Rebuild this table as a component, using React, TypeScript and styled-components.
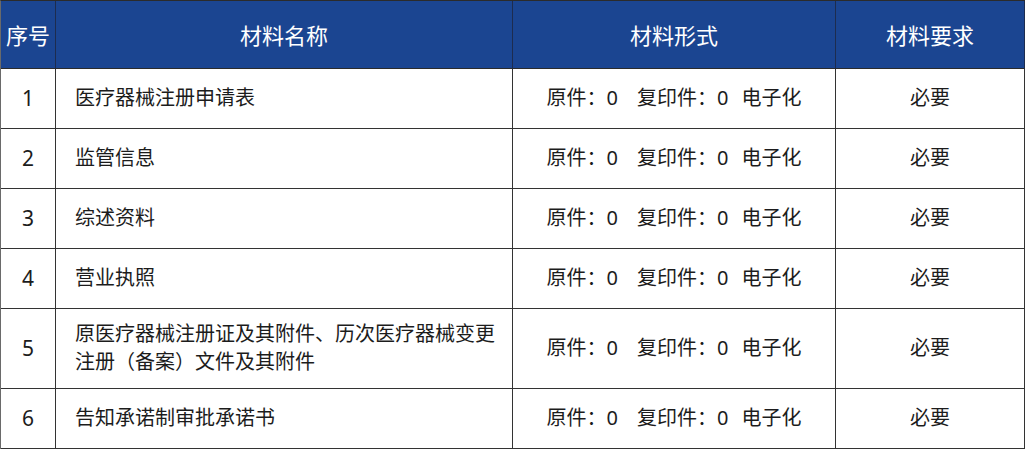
import React from "react";
import styled, { createGlobalStyle } from "styled-components";

const Global = createGlobalStyle`
  html, body { margin: 0; padding: 0; background: #ffffff; }
  body { font-family: "Noto Sans", "Noto Sans CJK SC", sans-serif; }
`;

const Table = styled.div`
  display: grid;
  grid-template-columns: 55px 457px 323px 189px;
  width: 1025px;
  border-top: 1px solid #2b2b2b;
  border-left: 1px solid #6a6a6a;
  box-sizing: border-box;
`;

const HeadCell = styled.div`
  height: 68px;
  box-sizing: border-box;
  background: #1b4591;
  color: #ffffff;
  border-right: 1px solid #1d2c4f;
  border-bottom: 1px solid #2b2b2b;
  display: flex;
  align-items: center;
  justify-content: center;
  font-size: 22px;
  padding-bottom: 2px;
`;

const Cell = styled.div<{ $tall?: boolean; $left?: boolean }>`
  height: ${(p) => (p.$tall ? 80 : 60)}px;
  box-sizing: border-box;
  border-right: 1px solid #333333;
  border-bottom: 1px solid #333333;
  display: flex;
  align-items: center;
  justify-content: ${(p) => (p.$left ? "flex-start" : "center")};
  padding: ${(p) => (p.$left ? "0 8px 0 19px" : "0")};
  padding-bottom: 2px;
  color: #1c1c1c;
  font-size: 20px;
  line-height: 28px;
`;

const Num = styled.span`
  font-size: 21px;
`;

const Form = styled.span`
  display: inline-flex;
`;

const FormPart = styled.span<{ $gap: number }>`
  margin-right: ${(p) => p.$gap}px;
`;

const rows = [
  "医疗器械注册申请表",
  "监管信息",
  "综述资料",
  "营业执照",
  "原医疗器械注册证及其附件、历次医疗器械变更注册（备案）文件及其附件",
  "告知承诺制审批承诺书",
];

export default function App() {
  return (
    <>
      <Global />
      <Table>
        <HeadCell>序号</HeadCell>
        <HeadCell>材料名称</HeadCell>
        <HeadCell>材料形式</HeadCell>
        <HeadCell>材料要求</HeadCell>
        {rows.map((name, i) => {
          const tall = name.length > 22;
          return (
            <React.Fragment key={i}>
              <Cell $tall={tall}>
                <Num>{i + 1}</Num>
              </Cell>
              <Cell $tall={tall} $left>
                {name}
              </Cell>
              <Cell $tall={tall}>
                <Form>
                  <FormPart $gap={19}>原件：0</FormPart>
                  <FormPart $gap={13}>复印件：0</FormPart>
                  <FormPart $gap={0}>电子化</FormPart>
                </Form>
              </Cell>
              <Cell $tall={tall}>必要</Cell>
            </React.Fragment>
          );
        })}
      </Table>
    </>
  );
}
